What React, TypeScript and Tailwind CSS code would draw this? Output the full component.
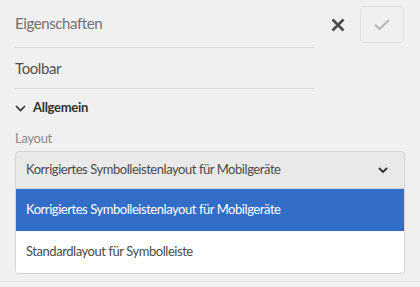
import React from "react";

export default function App() {
  return (
    <div className="w-[420px] h-[287px] bg-[#f0f0f0] overflow-hidden relative" style={{ fontFamily: "Lato, 'Open Sans', sans-serif" }}>
      <div className="flex">
        <div className="w-[300px] ml-[15px]">
          <div className="h-[48px] border-b border-[#dcdcdc] flex items-center text-[15px] tracking-[-0.4px] text-[#707070]">Eigenschaften</div>
          <div className="h-[41px] border-b border-[#dcdcdc] flex items-center text-[15px] tracking-[-0.4px] text-[#505050]">Toolbar</div>
        </div>
        <div className="flex items-start pt-[6px] ml-[15px]">
          <div className="w-[16px] h-[37px] flex items-center justify-center">
            <svg width="14" height="14" viewBox="0 0 14 14">
              <path d="M1.5 1.5 L12.5 12.5 M12.5 1.5 L1.5 12.5" stroke="#4b4b4b" strokeWidth="2.6" strokeLinecap="butt" />
            </svg>
          </div>
          <div className="ml-[14px] w-[44px] h-[37px] border border-[#e0e0e0] rounded-[4px] flex items-center justify-center">
            <svg width="18" height="13" viewBox="0 0 18 13">
              <path d="M2 6.5 L6.5 11 L16 2" stroke="#b8b8b8" strokeWidth="2" fill="none" />
            </svg>
          </div>
        </div>
      </div>
      <div className="ml-[15px] mt-[9px] flex items-center h-[20px]">
        <svg width="11" height="7" viewBox="0 0 11 7">
          <path d="M1 1 L5.5 5.5 L10 1" stroke="#323232" strokeWidth="1.6" fill="none" />
        </svg>
        <span className="ml-[7px] text-[13px] font-bold tracking-[-0.3px] text-[#323232]">Allgemein</span>
      </div>
      <div className="ml-[15px] mt-[12px] text-[13px] tracking-[-0.3px] text-[#8a8a8a] h-[16px] leading-[16px]">Layout</div>
      <div className="ml-[15px] mt-[5px] w-[390px]">
        <div className="h-[38px] bg-[#e9e9e9] border border-[#d4d4d4] rounded-t-[4px] flex items-center justify-between pl-[10px] pr-[16px] text-[13px] tracking-[-0.45px] text-[#4b4b4b]">
          <span>Korrigiertes Symbolleistenlayout für Mobilgeräte</span>
          <svg width="10" height="7" viewBox="0 0 10 7">
            <path d="M1 1 L5 5 L9 1" stroke="#323232" strokeWidth="1.8" fill="none" />
          </svg>
        </div>
        <div className="border border-t-0 border-[#d4d4d4] rounded-b-[4px] bg-white overflow-hidden text-[13px] tracking-[-0.45px]">
          <div className="h-[42px] bg-[#326ec8] text-white flex items-center pl-[10px]">Korrigiertes Symbolleistenlayout für Mobilgeräte</div>
          <div className="h-[42px] bg-white text-[#4b4b4b] flex items-center pl-[10px]">Standardlayout für Symbolleiste</div>
        </div>
      </div>
      <div className="absolute left-0 right-0 top-[281px] h-[6px] border-t border-[#e4e4e4] bg-[#f2f2f2]" />
    </div>
  );
}
